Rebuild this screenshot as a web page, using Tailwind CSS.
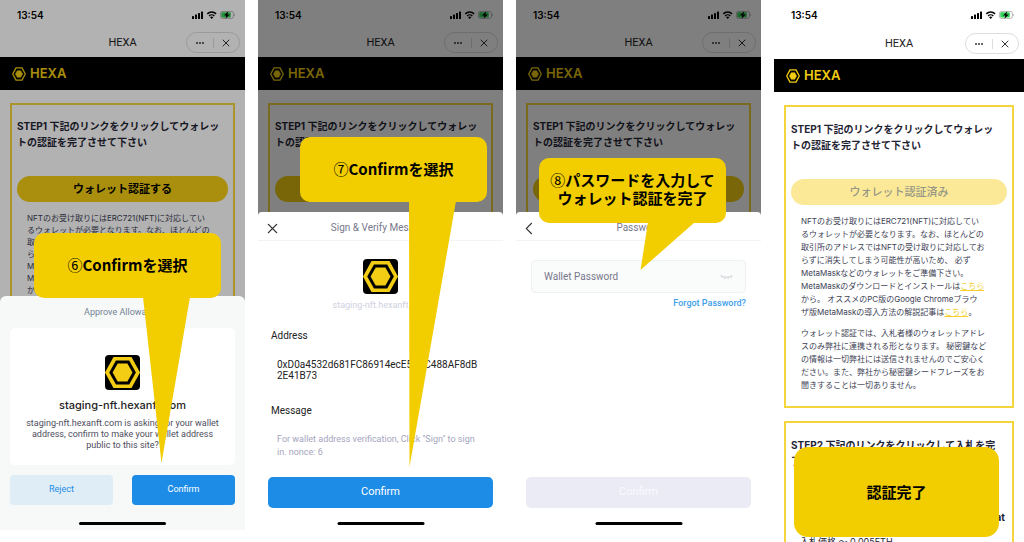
<!DOCTYPE html>
<html lang="ja">
<head>
<meta charset="utf-8">
<meta name="viewport" content="width=device-width, initial-scale=1">
<title>HEXA ウォレット認証</title>
<script src="https://cdn.jsdelivr.net/npm/@tailwindcss/browser@4"></script>
</head>
<body class="bg-white font-[Inter,'Noto_Sans_CJK_JP',sans-serif] text-[#1f2433]">
<svg class="hidden" aria-hidden="true">
  <symbol id="status" viewBox="0 0 44 10">
    <rect x="0" y="6" width="2" height="3" rx=".5"/><rect x="3" y="4.6" width="2" height="4.4" rx=".5"/><rect x="6" y="3" width="2" height="6" rx=".5"/><rect x="9" y="1.4" width="2" height="7.6" rx=".5"/>
    <path d="M15.3 3.9a6.2 6.2 0 0 1 8.8 0" fill="none" stroke="#000" stroke-width="1.5"/>
    <path d="M17.1 5.9a3.7 3.7 0 0 1 5.2 0" fill="none" stroke="#000" stroke-width="1.4"/>
    <path d="M18.1 7.3a2.2 2.2 0 0 1 3.2 0L19.7 9z"/>
    <rect x="28.4" y="1.4" width="13" height="7" rx="2" fill="none" stroke="#000" stroke-opacity=".35" stroke-width=".8"/>
    <rect x="29.3" y="2.2" width="9.5" height="5.4" rx="1" fill="#34d158"/>
    <path d="M42.4 3.7v2.4c1-.3 1-2.1 0-2.4z" fill-opacity=".4"/>
    <path d="M36.2 1.2 32 5.4h2.4l-.9 3.4 4.3-4.4h-2.5z"/>
  </symbol>
  <symbol id="logo" viewBox="0 0 14 14">
    <path d="M4 .9h6L13.300 7 10 13.100H4L.7 7z" fill="none" stroke="#f2cd13" stroke-width="1.300" stroke-linejoin="round"/>
    <path d="M5.3 3.700h3.400L10.600 7l-1.900 3.300H5.300L3.400 7z" fill="#f2cd13" stroke="#f2cd13" stroke-width=".5" stroke-linejoin="round"/>
  </symbol>
  <symbol id="app" viewBox="0 0 35 35">
    <rect width="35" height="35" rx="4"/>
    <path d="M8.500 2h18L35 17.500 26.500 33h-18L0 17.500z" fill="#f2cd13"/>
    <path d="M11 5.600h13.200L30.900 17.500 24.200 29.400H11L4.200 17.500z"/>
    <path d="M12.700 8.600h9.700L27.500 17.500l-5.100 8.900h-9.700L7.600 17.500z" fill="#f2cd13"/>
  </symbol>
  <symbol id="dots" viewBox="0 0 8 8"><circle cx="1" cy="4" r=".9" fill="#222"/><circle cx="4" cy="4" r=".9" fill="#222"/><circle cx="7" cy="4" r=".9" fill="#222"/></symbol>
  <symbol id="close" viewBox="0 0 8 8"><path d="m1 1 6 6m0-6L1 7" fill="none" stroke="#333" stroke-linecap="round"/></symbol>
</svg>

<main class="grid grid-cols-[245fr_245fr_245fr_250fr] gap-[13px] h-screen min-h-[542px] overflow-hidden items-start">

  <!-- Allow access -->
  <section class="relative h-[530px] min-w-0">
    <div class="h-full overflow-hidden bg-white">
      <div class="flex h-[30px] items-center justify-between pl-[17px] pr-[9px] text-[10px] font-semibold text-black"><span>13:54</span><svg class="h-[10px] w-[44px]"><use href="#status"/></svg></div>
      <div class="relative flex h-[27px] items-center justify-center font-[Roboto,sans-serif] text-[11px] text-[#222]">HEXA
        <div class="absolute right-[5px] top-[2px] flex h-[21px] w-[54px] items-center rounded-full border border-[#dcdcdc]">
          <button class="flex flex-1 justify-center" aria-label="メニュー"><svg class="size-[8px]"><use href="#dots"/></svg></button><span class="h-[10px] w-px bg-[#ddd]"></span><button class="flex flex-1 justify-center" aria-label="閉じる"><svg class="size-[8px]"><use href="#close"/></svg></button>
        </div>
      </div>
      <header class="flex h-[33px] items-center gap-[4px] bg-black pl-[12px] text-[13px] font-semibold text-[#f2cd13]"><svg class="size-[14px]"><use href="#logo"/></svg>HEXA</header>
      <div class="mx-[10px] mt-[13px] h-[460px] border-2 border-[#f5d53c] px-[5px] pt-[13px]">
        <h2 class="whitespace-nowrap text-[10px] font-bold leading-[16px]">STEP1 下記のリンクをクリックしてウォレッ<br>トの認証を完了させて下さい</h2>
        <button class="mt-[26px] h-[26px] w-full rounded-full bg-[#f2cd13] text-[11px] font-bold text-black">ウォレット認証する</button>
        <p class="mt-[10px] whitespace-nowrap pl-[10px] text-[8px] leading-[12px] text-[#3d4254]">NFTのお受け取りにはERC721(NFT)に対応してい<br>るウォレットが必要となります。なお、ほとんどの<br>取引所のアドレスではNFTの受け取りに対応してお<br>らずに消失してしまう可能性が高いため、 必ず<br>MetaMaskなどのウォレットをご準備下さい。<br>MetaMaskのダウンロードとインストールは<br>から。</p>
      </div>
    </div>
    <div class="absolute inset-0 bg-black/30"></div>
    <div class="absolute inset-x-0 bottom-0 top-[296px] rounded-t-[6px] bg-[#f7f9f9] px-[10px] text-center font-[Roboto,sans-serif]">
      <h3 class="h-[32px] text-[9px] leading-[32px] text-[#738394]">Approve Allowance</h3>
      <div class="h-[137px] rounded-[5px] bg-white pt-[27px]">
        <svg class="mx-auto size-[35px]"><use href="#app"/></svg>
        <h4 class="mt-[7px] font-[Inter,sans-serif] text-[11px] font-medium leading-[16px] text-[#222]">staging-nft.hexanft.com</h4>
        <p class="mt-[5px] whitespace-nowrap text-[9px] leading-[11px] text-[#4e4e5d]">staging-nft.hexanft.com is asking for your wallet<br>address, confirm to make your wallet address<br>public to this site?</p>
      </div>
      <div class="mt-[10px] grid grid-cols-2 gap-[19px] text-[9px]">
        <button class="h-[30px] rounded-[4px] bg-[#dfedf7] text-[#1c8ce6]">Reject</button>
        <button class="h-[30px] rounded-[4px] bg-[#1c8ce6] text-white">Confirm</button>
      </div>
      <div class="mx-auto mt-[17px] h-[3px] w-[87px] rounded-full bg-black"></div>
    </div>
    <div class="absolute left-[34px] top-[233px] w-[187px]">
      <div class="flex h-[65px] items-center justify-center rounded-[10px] bg-[#f2cd00] text-[15px] font-bold text-black font-['Noto_Sans_CJK_JP',sans-serif]"><span><span class="font-normal">⑥</span>Confirmを選択</span></div>
      <svg class="absolute left-[109px] top-[64px] h-[166px] w-[47px]" viewBox="0 0 47 166" fill="#f2cd00"><path d="M0 0h47L18.500 166z"/></svg>
    </div>
  </section>

  <!-- Sign message -->
  <section class="relative h-[530px] min-w-0">
    <div class="h-full overflow-hidden bg-white">
      <div class="flex h-[30px] items-center justify-between pl-[17px] pr-[9px] text-[10px] font-semibold text-black"><span>13:54</span><svg class="h-[10px] w-[44px]"><use href="#status"/></svg></div>
      <div class="relative flex h-[27px] items-center justify-center font-[Roboto,sans-serif] text-[11px] text-[#222]">HEXA
        <div class="absolute right-[5px] top-[2px] flex h-[21px] w-[54px] items-center rounded-full border border-[#dcdcdc]">
          <button class="flex flex-1 justify-center" aria-label="メニュー"><svg class="size-[8px]"><use href="#dots"/></svg></button><span class="h-[10px] w-px bg-[#ddd]"></span><button class="flex flex-1 justify-center" aria-label="閉じる"><svg class="size-[8px]"><use href="#close"/></svg></button>
        </div>
      </div>
      <header class="flex h-[33px] items-center gap-[4px] bg-black pl-[12px] text-[13px] font-semibold text-[#f2cd13]"><svg class="size-[14px]"><use href="#logo"/></svg>HEXA</header>
      <div class="mx-[10px] mt-[13px] h-[460px] border-2 border-[#f5d53c] px-[5px] pt-[13px]">
        <h2 class="whitespace-nowrap text-[10px] font-bold leading-[16px]">STEP1 下記のリンクをクリックしてウォレッ<br>トの認証を完了させて下さい</h2>
        <button class="mt-[26px] h-[26px] w-full rounded-full bg-[#f2cd13] text-[11px] font-bold text-black" aria-label="ウォレット認証する"></button>
      </div>
    </div>
    <div class="absolute inset-0 bg-black/50"></div>
    <div class="absolute inset-x-0 bottom-0 top-[212px] rounded-t-[4px] bg-white font-[Roboto,sans-serif]">
      <div class="relative h-[29px] border-b border-[#f3f3f6] text-center text-[10px] leading-[32px] text-[#77778b]">
        <button class="absolute left-[9px] top-[11px]" aria-label="閉じる"><svg class="size-[11px]"><use href="#close"/></svg></button>Sign &amp; Verify Message</div>
      <svg class="mx-auto mt-[18px] size-[35px]"><use href="#app"/></svg>
      <p class="mt-[5px] text-center text-[9px] leading-[12px] text-[#cfd0e0]">staging-nft.hexanft.com</p>
      <div class="pl-[13px] pr-[10px]">
        <h4 class="mt-[17px] text-[10px] leading-[16px] text-[#222]">Address</h4>
        <p class="mt-[15px] whitespace-nowrap pl-[6px] text-[10px] leading-[11px] text-[#222]">0xD0a4532d681FC86914ecE5A2C488AF8dB<br>2E41B73</p>
        <h4 class="mt-[22px] text-[10px] leading-[16px] text-[#222]">Message</h4>
        <p class="mt-[14px] whitespace-nowrap pl-[6px] text-[9px] leading-[13px] text-[#a5a5bd]">For wallet address verification, Click "Sign" to sign<br>in. nonce: 6</p>
      </div>
      <div class="mt-[18px] px-[10px]"><button class="h-[31px] w-full rounded-[5px] bg-[#1c8ce6] text-[11px] text-white">Confirm</button></div>
      <div class="absolute bottom-[5px] left-1/2 h-[3px] w-[87px] -translate-x-1/2 rounded-full bg-black"></div>
    </div>
    <div class="absolute left-[42px] top-[137px] w-[187px]">
      <div class="flex h-[65px] items-center justify-center rounded-[10px] bg-[#f2cd00] text-[15px] font-bold text-black font-['Noto_Sans_CJK_JP',sans-serif]"><span><span class="font-normal">⑦</span>Confirmを選択</span></div>
      <svg class="absolute left-[109px] top-[64px] h-[266px] w-[47px]" viewBox="0 0 47 266" fill="#f2cd00"><path d="M0 0h47L.5 266z"/></svg>
    </div>
  </section>

  <!-- Wallet password -->
  <section class="relative h-[530px] min-w-0">
    <div class="h-full overflow-hidden bg-white">
      <div class="flex h-[30px] items-center justify-between pl-[17px] pr-[9px] text-[10px] font-semibold text-black"><span>13:54</span><svg class="h-[10px] w-[44px]"><use href="#status"/></svg></div>
      <div class="relative flex h-[27px] items-center justify-center font-[Roboto,sans-serif] text-[11px] text-[#222]">HEXA
        <div class="absolute right-[5px] top-[2px] flex h-[21px] w-[54px] items-center rounded-full border border-[#dcdcdc]">
          <button class="flex flex-1 justify-center" aria-label="メニュー"><svg class="size-[8px]"><use href="#dots"/></svg></button><span class="h-[10px] w-px bg-[#ddd]"></span><button class="flex flex-1 justify-center" aria-label="閉じる"><svg class="size-[8px]"><use href="#close"/></svg></button>
        </div>
      </div>
      <header class="flex h-[33px] items-center gap-[4px] bg-black pl-[12px] text-[13px] font-semibold text-[#f2cd13]"><svg class="size-[14px]"><use href="#logo"/></svg>HEXA</header>
      <div class="mx-[10px] mt-[13px] h-[460px] border-2 border-[#f5d53c] px-[5px] pt-[13px]">
        <h2 class="whitespace-nowrap text-[10px] font-bold leading-[16px]">STEP1 下記のリンクをクリックしてウォレッ<br>トの認証を完了させて下さい</h2>
        <button class="mt-[26px] h-[26px] w-full rounded-full bg-[#f2cd13] text-[11px] font-bold text-black" aria-label="ウォレット認証する"></button>
      </div>
    </div>
    <div class="absolute inset-0 bg-black/50"></div>
    <div class="absolute inset-x-0 bottom-0 top-[212px] rounded-t-[4px] bg-white font-[Roboto,sans-serif]">
      <div class="relative h-[29px] border-b border-[#f3f3f6] text-center text-[10px] leading-[32px] text-[#77778b]">
        <button class="absolute left-[9px] top-[10px]" aria-label="戻る"><svg class="h-[13px] w-[8px]" viewBox="0 0 8 13"><path d="M6.800 1 1.300 6.500l5.500 5.500" fill="none" stroke="#333" stroke-width="1.100"/></svg></button>Password</div>
      <div class="mt-[19px] px-[15px]">
        <div class="flex h-[33px] items-center rounded-[4px] border border-[#eff0f6] bg-[#fafbfb] px-[12px]">
          <input type="password" aria-label="Wallet Password" placeholder="Wallet Password" class="min-w-0 flex-1 bg-transparent text-[10px] outline-none placeholder:text-[#77778b]">
          <svg class="h-[6px] w-[13px]" viewBox="0 0 13 6" fill="none" stroke="#c3c5cd" stroke-width=".8"><path d="M.5 1.500Q6.500 5 12.500 1.500M2.500 2.500l-1 1.500M5 3.300l-.4 1.700M8 3.300l.4 1.700M10.500 2.500l1 1.500"/></svg>
        </div>
        <div class="mt-[3px] text-right text-[9px] leading-[14px]"><a href="#" class="font-medium text-[#3d9eea]">Forgot Password?</a></div>
      </div>
      <div class="absolute inset-x-[10px] top-[265px]"><button disabled class="h-[31px] w-full rounded-[5px] bg-[#ebebf5] text-[11px] text-[#fafaff]">Confirm</button></div>
      <div class="absolute bottom-[5px] left-1/2 h-[3px] w-[87px] -translate-x-1/2 rounded-full bg-black"></div>
    </div>
    <div class="absolute left-[23px] top-[158px] w-[187px]">
      <div class="flex h-[65px] items-center justify-center rounded-[10px] bg-[#f2cd00] pb-[3px] text-center text-[15px] font-bold leading-[18px] text-black font-['Noto_Sans_CJK_JP',sans-serif]"><span><span class="font-normal">⑧</span>パスワードを入力して<br>ウォレット認証を完了</span></div>
      <svg class="absolute left-[101px] top-[64px] h-[48px] w-[55px]" viewBox="0 0 55 48" fill="#f2cd00"><path d="M8 0h47L.5 48z"/></svg>
    </div>
  </section>

  <!-- Verified -->
  <section class="relative h-full min-w-0 overflow-hidden bg-white">
    <div class="flex h-[30px] items-center justify-between pl-[17px] pr-[9px] text-[10px] font-semibold text-black"><span>13:54</span><svg class="h-[10px] w-[44px]"><use href="#status"/></svg></div>
    <div class="relative flex h-[29px] items-center justify-center font-[Roboto,sans-serif] text-[11px] text-[#222]">HEXA
      <div class="absolute right-[5px] top-[3px] flex h-[21px] w-[54px] items-center rounded-full border border-[#dcdcdc]">
        <button class="flex flex-1 justify-center" aria-label="メニュー"><svg class="size-[8px]"><use href="#dots"/></svg></button><span class="h-[10px] w-px bg-[#ddd]"></span><button class="flex flex-1 justify-center" aria-label="閉じる"><svg class="size-[8px]"><use href="#close"/></svg></button>
      </div>
    </div>
    <header class="flex h-[33px] items-center gap-[4px] bg-black pl-[12px] text-[13px] font-semibold text-[#f2cd13]"><svg class="size-[14px]"><use href="#logo"/></svg>HEXA</header>
    <div class="mx-[10px] mt-[13px] border-2 border-[#f5d53c] px-[5px] pb-[14px] pt-[14px]">
      <h2 class="whitespace-nowrap text-[10px] font-bold leading-[16px]">STEP1 下記のリンクをクリックしてウォレッ<br>トの認証を完了させて下さい</h2>
      <button disabled class="mt-[26px] h-[26px] w-full rounded-full bg-[#fbe997] text-[11px] font-medium text-[#969687]">ウォレット認証済み</button>
      <div class="whitespace-nowrap pl-[10px] text-[8px] leading-[13px] text-[#3d4254]">
        <p class="mt-[10px]">NFTのお受け取りにはERC721(NFT)に対応してい<br>るウォレットが必要となります。なお、ほとんどの<br>取引所のアドレスではNFTの受け取りに対応してお<br>らずに消失してしまう可能性が高いため、 必ず<br>MetaMaskなどのウォレットをご準備下さい。<br>MetaMaskのダウンロードとインストールは<a href="#" class="text-[#f5cf2a] underline">こちら</a><br>から。 オススメのPC版のGoogle Chromeブラウ<br>ザ版MetaMaskの導入方法の解説記事は<a href="#" class="text-[#f5cf2a] underline">こちら</a>。</p>
        <p class="mt-[8px]">ウォレット認証では、入札者様のウォレットアドレ<br>スのみ弊社に連携される形となります。 秘密鍵など<br>の情報は一切弊社には送信されませんのでご安心く<br>ださい。また、弊社から秘密鍵シードフレーズをお<br>聞きすることは一切ありません。</p>
      </div>
    </div>
    <div class="mx-[10px] mt-[13px] h-[200px] border-2 border-[#f5d53c] px-[5px] pt-[14px]">
      <h2 class="whitespace-nowrap text-[10px] font-bold leading-[16px]">STEP2 下記のリンクをクリックして入札を完<br>了させて下さい</h2>
      <p class="mt-[40px] pr-[2px] text-right text-[10px] font-bold leading-[16px]">Cat</p>
      <p class="mt-[10px] pl-[9px] text-[9px] leading-[13px]">入札価格 ～ 0.005ETH</p>
    </div>
    <div class="absolute left-[20px] top-[447px] flex h-[90px] w-[205px] items-center justify-center rounded-[14px] bg-[#f2cd00] text-[15px] font-bold text-black font-['Noto_Sans_CJK_JP',sans-serif]">認証完了</div>
  </section>
</main>
</body>
</html>
